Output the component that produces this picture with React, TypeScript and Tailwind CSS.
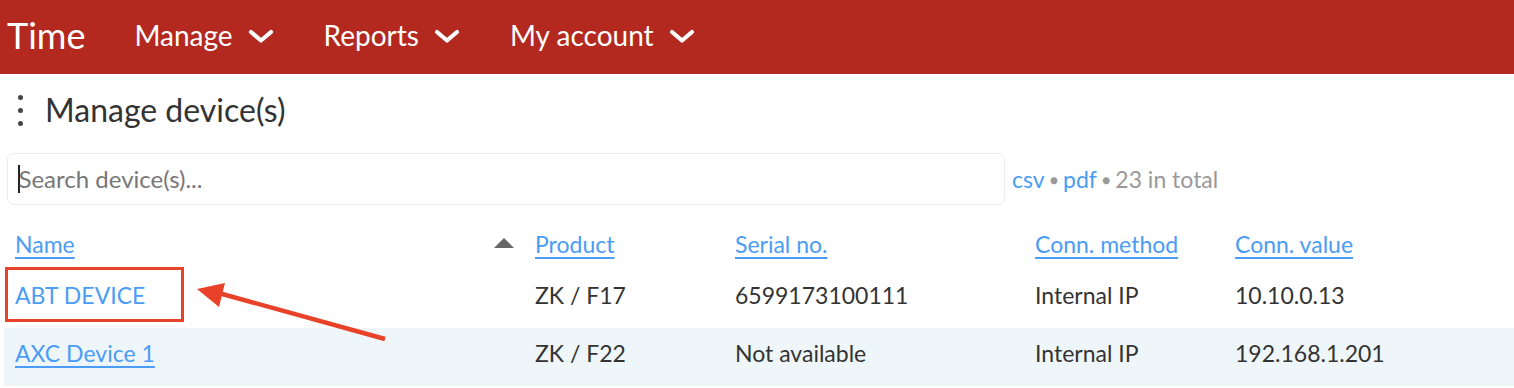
import React from 'react';

const devices = [
    { name: 'ABT DEVICE', product: 'ZK / F17', serial: '6599173100111', method: 'Internal IP', value: '10.10.0.13', highlight: true },
    { name: 'AXC Device 1', product: 'ZK / F22', serial: 'Not available', method: 'Internal IP', value: '192.168.1.201', highlight: false },
];

const Chevron = () => (
    <svg width="26" height="16" viewBox="0 0 26 16" className="ml-[15px] mt-[3px]">
        <path d="M3 4 L13 12.5 L23 4" fill="none" stroke="white" strokeWidth="4.2" strokeLinecap="round" strokeLinejoin="round" />
    </svg>
);

const NavItem = ({ label }: { label: string }) => (
    <div className="flex items-center text-[28px] text-white mr-[50px]">
        {label}
        <Chevron />
    </div>
);

const cols = 'grid grid-cols-[520px_200px_300px_200px_1fr]';

const App: React.FC = () => {
    return (
        <div className="w-[1514px] h-[388px] bg-white overflow-hidden font-['Lato','Open_Sans',sans-serif] relative">
            {/* top bar */}
            <div className="h-[74px] bg-[#b3291f] flex items-center pl-[7px] pb-[5px]">
                <div className="text-[36px] text-white mr-[49px] mt-[1px]">Time</div>
                <NavItem label="Manage" />
                <NavItem label="Reports" />
                <NavItem label="My account" />
            </div>

            {/* title */}
            <div className="flex items-center h-[36px] mt-[18px]">
                <div className="w-[41px] flex flex-col items-center gap-[8px]">
                    <span className="w-[5px] h-[5px] rounded-full bg-[#444]" />
                    <span className="w-[5px] h-[5px] rounded-full bg-[#444]" />
                    <span className="w-[5px] h-[5px] rounded-full bg-[#444]" />
                </div>
                <h1 className="text-[32px] text-[#333] leading-none ml-[4px]">Manage device(s)</h1>
            </div>

            {/* search */}
            <div className="flex items-center mt-[25px] pl-[7px]">
                <div className="w-[998px] h-[52px] border-[1.5px] border-[#ececec] rounded-[7px] flex items-center pl-[10px] text-[24px] text-[#777]">
                    <span className="w-[1.5px] h-[28px] bg-[#222] -mr-[1px]" />
                    Search device(s)...
                </div>
                <div className="ml-[7px] text-[23px] text-[#999] flex items-center gap-[5px]">
                    <span className="text-[#4b9cf5]">csv</span>
                    <span className="text-[14px]">●</span>
                    <span className="text-[#4b9cf5]">pdf</span>
                    <span className="text-[14px]">●</span>
                    <span>23 in total</span>
                </div>
            </div>

            {/* table */}
            <div className="mt-[15px] pl-[4px] text-[23px]">
                <div className={`${cols} h-[48px] pt-[7px] pl-[3px]`}>
                    <div className="flex justify-between pl-[8px] pr-[13px]">
                        <span className="text-[#4b9cf5] underline underline-offset-[4px] decoration-[1.5px]">Name</span>
                        <svg width="20" height="10" viewBox="0 0 20 10" className="mt-[11px]">
                            <path d="M10 0 L20 10 L0 10 Z" fill="#666" />
                        </svg>
                    </div>
                    {['Product', 'Serial no.', 'Conn. method', 'Conn. value'].map(h => (
                        <div key={h} className="pl-[8px]">
                            <span className="text-[#4b9cf5] underline underline-offset-[4px] decoration-[1.5px]">{h}</span>
                        </div>
                    ))}
                </div>
                {devices.map((d, i) => (
                    <div key={d.name} className={`${cols} relative pl-[3px] ${i === 0 ? 'h-[60px] pt-[10px]' : 'h-[58px] pt-[8px] bg-[#eff6fa]'} text-[#333]`}>
                        <div className="pl-[8px]">
                            <span className={`text-[#4b9cf5] ${d.highlight ? '' : 'underline underline-offset-[4px] decoration-[1.5px]'}`}>{d.name}</span>
                        </div>
                        <div className="pl-[8px]">{d.product}</div>
                        <div className="pl-[8px]">{d.serial}</div>
                        <div className="pl-[8px]">{d.method}</div>
                        <div className="pl-[8px]">{d.value}</div>
                        {d.highlight && (
                            <span className="absolute left-[1px] top-[-1px] w-[179px] h-[55px] border-[3.5px] border-[#e8432a]" />
                        )}
                    </div>
                ))}
            </div>

            {/* annotation arrow */}
            <svg className="absolute left-0 top-0 pointer-events-none" width="1514" height="388">
                <line x1="385" y1="339" x2="215" y2="292" stroke="#e8432a" strokeWidth="4.5" />
                <path d="M197 289 L225 283 L219 307 Z" fill="#e8432a" />
            </svg>
        </div>
    );
};

export default App;
